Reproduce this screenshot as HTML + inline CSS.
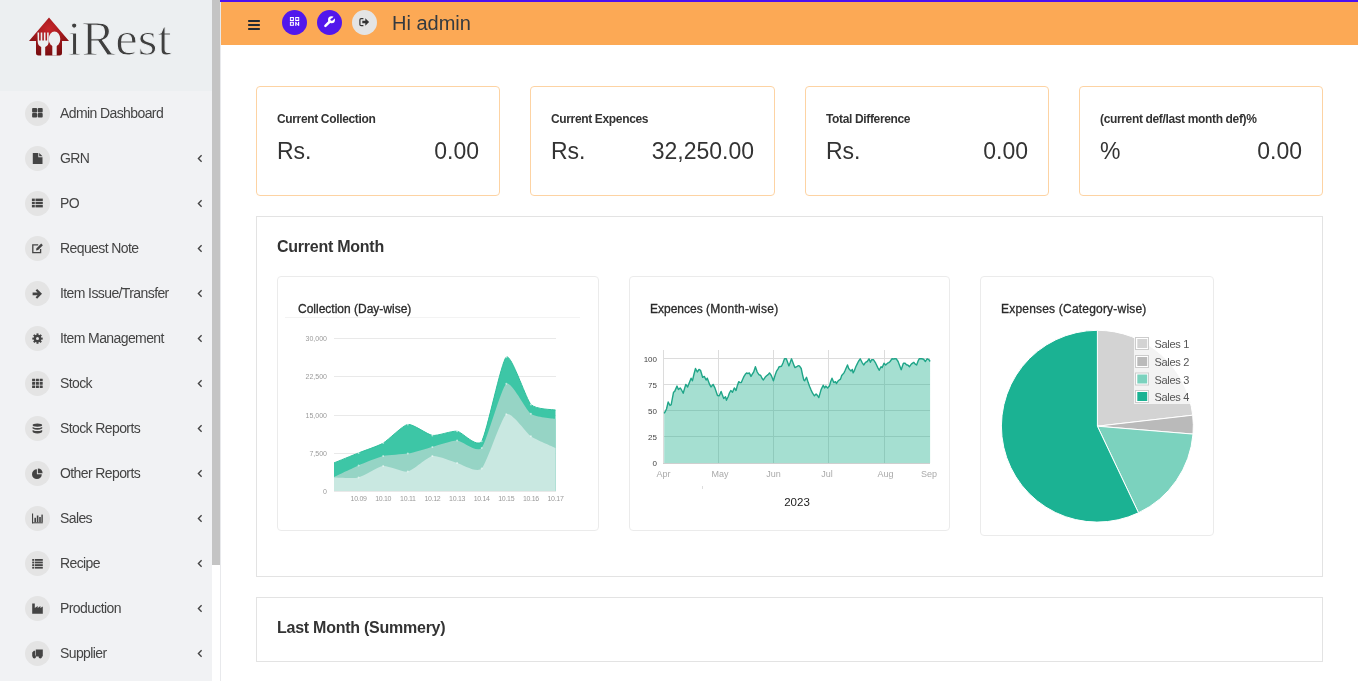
<!DOCTYPE html>
<html><head><meta charset="utf-8">
<style>
*{margin:0;padding:0;box-sizing:border-box}
html,body{width:1358px;height:681px;overflow:hidden;background:#fff;font-family:"Liberation Sans",sans-serif;color:#333}
body>*{will-change:transform}
.abs{position:absolute}
#side{position:absolute;left:0;top:0;width:212px;height:681px;background:#f1f2f4}
#logo{position:absolute;left:0;top:0;width:212px;height:91px;background:#eceff1}
#sb{position:absolute;left:212px;top:0;width:8px;height:681px;background:#fff}
#thumb{position:absolute;left:212px;top:0;width:8px;height:565px;background:#c4c4c4}
#vline{position:absolute;left:220px;top:0;width:1px;height:681px;background:#e8e9ec}
.mi{position:absolute;left:0;width:212px;height:45px}
.mi .ic{position:absolute;left:25px;top:10px;width:25px;height:25px;border-radius:50%;background:#e4e4e4}
.mi .ic svg{position:absolute;left:0;top:0}
.mi .t{position:absolute;left:60px;top:0;line-height:45px;font-size:14px;color:#444;white-space:nowrap;letter-spacing:-0.6px}
.mi .ch{position:absolute;left:196px;top:18px}
#hdr{position:absolute;left:221px;top:0;width:1137px;height:45px;background:#fca955}
#hdrtop{position:absolute;left:220px;top:0;width:1138px;height:2px;background:#4c10ef}
.hc{position:absolute;top:10px;width:25px;height:25px;border-radius:50%}
.card{position:absolute;top:86px;width:244px;height:110px;border:1px solid #fdd3a3;border-radius:4px;background:#fff}
.card .ti{position:absolute;left:20px;top:25px;font-size:12px;font-weight:bold;color:#333;letter-spacing:-0.35px;white-space:nowrap}
.card .l{position:absolute;left:20px;top:51px;font-size:23px;color:#333}
.card .r{position:absolute;right:20px;top:51px;font-size:23px;color:#333}
.panel{position:absolute;left:256px;width:1067px;border:1px solid #e3e3e3;background:#fff}
.ph{position:absolute;left:20px;font-size:16px;font-weight:bold;color:#333;letter-spacing:-0.25px;white-space:nowrap}
.cc{position:absolute;border:1px solid #ebebeb;border-radius:4px;background:#fff}
.ct{position:absolute;font-size:12px;color:#2a2a2a;white-space:nowrap;-webkit-text-stroke:0.3px #2a2a2a}
svg text{font-family:"Liberation Sans",sans-serif}
</style></head><body>
<div id="side">
  <div id="logo">
    <svg class="abs" style="left:0;top:0" width="212" height="91" viewBox="0 0 212 91">
      <defs><radialGradient id="rg" cx="0.5" cy="0.3" r="0.7"><stop offset="0" stop-color="#c8262a"/><stop offset="1" stop-color="#7a0d10"/></radialGradient></defs>
      <path d="M49 17.5 L69 41 L62 41 L62 53 Q62 55.5 59.5 55.5 L38.5 55.5 Q36 55.5 36 53 L36 41 L29 41 Z" fill="url(#rg)"/>
      <g fill="#eceff1">
        <path d="M37.5 32.5 h1.6 v8 h1.6 v-8 h1.6 v8 h1.6 v-8 h1.6 v8 h1.6 v-8 h1.6 v9 q0 4 -3.5 5.5 v9.5 h-4 v-9.5 q-3.5 -1.5 -3.5 -5.5 Z"/>
        <ellipse cx="54.5" cy="39" rx="5.8" ry="7.5"/>
        <rect x="52.3" y="44" width="4.4" height="11.5"/>
      </g>
      <text x="67.5" y="55" style="font-family:'Liberation Serif',serif" font-size="48" fill="#3f3f3f" stroke="#eceff1" stroke-width="1" textLength="104" lengthAdjust="spacingAndGlyphs">iRest</text>
    </svg>
  </div>
  <div class="mi" style="top:91px"><div class="ic"><svg width="25" height="25" viewBox="0 0 25 25"><g fill="#444"><rect x="7.1" y="7.1" width="5" height="4.3" rx="0.9"/><rect x="12.7" y="7.1" width="5" height="4.3" rx="0.9"/><rect x="7.1" y="12.1" width="5" height="4.3" rx="0.9"/><rect x="12.7" y="12.1" width="5" height="4.3" rx="0.9"/></g></svg></div><div class="t">Admin Dashboard</div></div>
<div class="mi" style="top:136px"><div class="ic"><svg width="25" height="25" viewBox="0 0 25 25"><path d="M7.8 7 H13.3 V11.2 H17.5 V18 H7.8 Z M14.2 7 L17.5 10.3 H14.2 Z" fill="#444"/></svg></div><div class="t">GRN</div><svg class="ch" width="7" height="9" viewBox="0 0 7 9"><path d="M5.6 1.2 L2.4 4.5 L5.6 7.8" fill="none" stroke="#444" stroke-width="1.35"/></svg></div>
<div class="mi" style="top:181px"><div class="ic"><svg width="25" height="25" viewBox="0 0 25 25"><g fill="#444"><rect x="6.9" y="7.6" width="2.9" height="2.4"/><rect x="10.5" y="7.6" width="7.3" height="2.4"/><rect x="6.9" y="10.8" width="2.9" height="2.4"/><rect x="10.5" y="10.8" width="7.3" height="2.4"/><rect x="6.9" y="14" width="2.9" height="2.4"/><rect x="10.5" y="14" width="7.3" height="2.4"/></g></svg></div><div class="t">PO</div><svg class="ch" width="7" height="9" viewBox="0 0 7 9"><path d="M5.6 1.2 L2.4 4.5 L5.6 7.8" fill="none" stroke="#444" stroke-width="1.35"/></svg></div>
<div class="mi" style="top:226px"><div class="ic"><svg width="25" height="25" viewBox="0 0 25 25"><path d="M13.2 8.8 H7.8 V16.6 H15.6 V13" fill="none" stroke="#444" stroke-width="1.3"/><path d="M11 14.6 L11.5 12.3 L16.2 7.6 L17.9 9.3 L13.2 14 Z" fill="#444"/></svg></div><div class="t">Request Note</div><svg class="ch" width="7" height="9" viewBox="0 0 7 9"><path d="M5.6 1.2 L2.4 4.5 L5.6 7.8" fill="none" stroke="#444" stroke-width="1.35"/></svg></div>
<div class="mi" style="top:271px"><div class="ic"><svg width="25" height="25" viewBox="0 0 25 25"><path d="M7.6 11.8 H12.6 L10.6 9.8 L12.1 8.3 L17 13.2 L12.1 18.1 L10.6 16.6 L12.6 14.6 H7.6 Z" fill="#444" transform="translate(0,-0.4)"/></svg></div><div class="t">Item Issue/Transfer</div><svg class="ch" width="7" height="9" viewBox="0 0 7 9"><path d="M5.6 1.2 L2.4 4.5 L5.6 7.8" fill="none" stroke="#444" stroke-width="1.35"/></svg></div>
<div class="mi" style="top:316px"><div class="ic"><svg width="25" height="25" viewBox="0 0 25 25"><g fill="#444"><circle cx="12.5" cy="12.6" r="3.8"/><g stroke="#444" stroke-width="2"><line x1="12.5" y1="7.4" x2="12.5" y2="17.8"/><line x1="7.3" y1="12.6" x2="17.7" y2="12.6"/><line x1="8.8" y1="8.9" x2="16.2" y2="16.3"/><line x1="16.2" y1="8.9" x2="8.8" y2="16.3"/></g></g><circle cx="12.5" cy="12.6" r="1.5" fill="#e4e4e4"/></svg></div><div class="t">Item Management</div><svg class="ch" width="7" height="9" viewBox="0 0 7 9"><path d="M5.6 1.2 L2.4 4.5 L5.6 7.8" fill="none" stroke="#444" stroke-width="1.35"/></svg></div>
<div class="mi" style="top:361px"><div class="ic"><svg width="25" height="25" viewBox="0 0 25 25"><g fill="#444"><rect x="7.1" y="7.7" width="3" height="2.6" rx="0.3"/><rect x="10.9" y="7.7" width="3" height="2.6" rx="0.3"/><rect x="14.7" y="7.7" width="3" height="2.6" rx="0.3"/><rect x="7.1" y="11.1" width="3" height="2.6" rx="0.3"/><rect x="10.9" y="11.1" width="3" height="2.6" rx="0.3"/><rect x="14.7" y="11.1" width="3" height="2.6" rx="0.3"/><rect x="7.1" y="14.5" width="3" height="2.6" rx="0.3"/><rect x="10.9" y="14.5" width="3" height="2.6" rx="0.3"/><rect x="14.7" y="14.5" width="3" height="2.6" rx="0.3"/></g></svg></div><div class="t">Stock</div><svg class="ch" width="7" height="9" viewBox="0 0 7 9"><path d="M5.6 1.2 L2.4 4.5 L5.6 7.8" fill="none" stroke="#444" stroke-width="1.35"/></svg></div>
<div class="mi" style="top:406px"><div class="ic"><svg width="25" height="25" viewBox="0 0 25 25"><g fill="#444"><ellipse cx="12.4" cy="9.1" rx="4.8" ry="1.6"/><path d="M7.6 10.9 Q12.4 13.3 17.2 10.9 V12.6 Q12.4 15 7.6 12.6 Z"/><path d="M7.6 13.9 Q12.4 16.3 17.2 13.9 V15.6 Q17.2 17.4 12.4 17.4 Q7.6 17.4 7.6 15.6 Z"/></g></svg></div><div class="t">Stock Reports</div><svg class="ch" width="7" height="9" viewBox="0 0 7 9"><path d="M5.6 1.2 L2.4 4.5 L5.6 7.8" fill="none" stroke="#444" stroke-width="1.35"/></svg></div>
<div class="mi" style="top:451px"><div class="ic"><svg width="25" height="25" viewBox="0 0 25 25"><path d="M11.9 8.3 A4.9 4.9 0 1 0 16.8 13.2 H11.9 Z" fill="#444"/><path d="M12.9 7.6 A4.9 4.9 0 0 1 17.6 12.3 H12.9 Z" fill="#444"/></svg></div><div class="t">Other Reports</div><svg class="ch" width="7" height="9" viewBox="0 0 7 9"><path d="M5.6 1.2 L2.4 4.5 L5.6 7.8" fill="none" stroke="#444" stroke-width="1.35"/></svg></div>
<div class="mi" style="top:496px"><div class="ic"><svg width="25" height="25" viewBox="0 0 25 25"><g fill="#444"><rect x="7" y="7.5" width="1.1" height="9.8"/><rect x="7" y="16.3" width="10.8" height="1"/><rect x="9.4" y="11.8" width="1.6" height="4.5"/><rect x="11.8" y="9.5" width="1.6" height="6.8"/><rect x="14.2" y="11" width="1.6" height="5.3"/><rect x="16.4" y="8.6" width="1.4" height="7.7"/></g></svg></div><div class="t">Sales</div><svg class="ch" width="7" height="9" viewBox="0 0 7 9"><path d="M5.6 1.2 L2.4 4.5 L5.6 7.8" fill="none" stroke="#444" stroke-width="1.35"/></svg></div>
<div class="mi" style="top:541px"><div class="ic"><svg width="25" height="25" viewBox="0 0 25 25"><g fill="#444"><rect x="7.2" y="8" width="2" height="1.8"/><rect x="9.9" y="8" width="7.9" height="1.8"/><rect x="7.2" y="10.6" width="2" height="1.8"/><rect x="9.9" y="10.6" width="7.9" height="1.8"/><rect x="7.2" y="13.2" width="2" height="1.8"/><rect x="9.9" y="13.2" width="7.9" height="1.8"/><rect x="7.2" y="15.8" width="2" height="1.8"/><rect x="9.9" y="15.8" width="7.9" height="1.8"/></g></svg></div><div class="t">Recipe</div><svg class="ch" width="7" height="9" viewBox="0 0 7 9"><path d="M5.6 1.2 L2.4 4.5 L5.6 7.8" fill="none" stroke="#444" stroke-width="1.35"/></svg></div>
<div class="mi" style="top:586px"><div class="ic"><svg width="25" height="25" viewBox="0 0 25 25"><path d="M7.2 17.8 V7.4 H9.8 V12 L12.7 10 V12 L15.4 10 V12 L17.8 10.4 V17.8 Z" fill="#444"/></svg></div><div class="t">Production</div><svg class="ch" width="7" height="9" viewBox="0 0 7 9"><path d="M5.6 1.2 L2.4 4.5 L5.6 7.8" fill="none" stroke="#444" stroke-width="1.35"/></svg></div>
<div class="mi" style="top:631px"><div class="ic"><svg width="25" height="25" viewBox="0 0 25 25"><path d="M10.8 8.6 H17.8 V15.4 H10.8 Z M7.2 11.6 L8.9 9.8 H10.2 V15.4 H7.2 Z" fill="#444"/><circle cx="9.3" cy="15.8" r="1.7" fill="#444"/><circle cx="15.3" cy="15.8" r="1.7" fill="#444"/></svg></div><div class="t">Supplier</div><svg class="ch" width="7" height="9" viewBox="0 0 7 9"><path d="M5.6 1.2 L2.4 4.5 L5.6 7.8" fill="none" stroke="#444" stroke-width="1.35"/></svg></div>

</div>
<div id="sb"></div>
<div id="thumb"></div>
<div id="vline"></div>
<div id="hdr"></div>
<div id="hdrtop"></div>
<svg class="abs" style="left:248px;top:20px" width="12" height="10"><rect x="0" y="0" width="12" height="2" rx="0.8" fill="#232a33"/><rect x="0" y="4" width="12" height="2" rx="0.8" fill="#232a33"/><rect x="0" y="8" width="12" height="2" rx="0.8" fill="#232a33"/></svg>
<div class="hc" style="left:282px;background:#5217ec">
  <svg class="abs" style="left:0;top:0" width="25" height="25"><g fill="none" stroke="#fff" stroke-width="1"><rect x="8.4" y="7.5" width="3" height="3"/><rect x="13.7" y="7.5" width="3" height="3"/><rect x="8.4" y="12.3" width="3" height="3"/></g><g fill="#fff" opacity="0.6"><rect x="9.5" y="8.6" width="0.9" height="0.9"/><rect x="14.8" y="8.6" width="0.9" height="0.9"/><rect x="9.5" y="13.4" width="0.9" height="0.9"/></g><g fill="#fff"><rect x="13.2" y="11.8" width="1.2" height="4"/><rect x="16" y="11.8" width="1.2" height="4"/><path d="M14.2 12.2 L16.2 14.8 L16.2 15.8 L14.2 13.4 Z"/></g></svg>
</div>
<div class="hc" style="left:317px;background:#5217ec">
  <svg class="abs" style="left:0;top:0" width="25" height="25"><path d="M8.4 15.9 L12.8 11.5" stroke="#fff" stroke-width="2.5" stroke-linecap="round"/><circle cx="14.5" cy="9.8" r="3.5" fill="#fff"/><circle cx="14.7" cy="9.6" r="1.2" fill="#5217ec"/><path d="M14.2 9.1 L17.3 6 L18.8 7.5 L15.7 10.6 Z" fill="#5217ec"/></svg>
</div>
<div class="hc" style="left:352px;background:#e4e4e4">
  <svg class="abs" style="left:0;top:0" width="25" height="25"><path d="M11.4 8.7 H9.1 Q7.9 8.7 7.9 9.9 V14.5 Q7.9 15.7 9.1 15.7 H11.4" fill="none" stroke="#333" stroke-width="1.2"/><path d="M10.3 10.7 H13.3 V8.2 L17.1 12 L13.3 15.8 V13.3 H10.3 Z" fill="#333"/></svg>
</div>
<div class="abs" style="left:392px;top:12px;font-size:20px;color:#343a40;white-space:nowrap">Hi admin</div>

<div class="card" style="left:256px"><div class="ti">Current Collection</div><div class="l">Rs.</div><div class="r">0.00</div></div>
<div class="card" style="left:530px;width:245px"><div class="ti">Current Expences</div><div class="l">Rs.</div><div class="r">32,250.00</div></div>
<div class="card" style="left:805px"><div class="ti">Total Difference</div><div class="l">Rs.</div><div class="r">0.00</div></div>
<div class="card" style="left:1079px"><div class="ti">(current def/last month def)%</div><div class="l">%</div><div class="r">0.00</div></div>

<div class="panel" style="top:216px;height:361px"><div class="ph" style="top:21px">Current Month</div></div>
<div class="cc" style="left:277px;top:276px;width:322px;height:255px"></div>
<div class="cc" style="left:629px;top:276px;width:321px;height:255px"></div>
<div class="cc" style="left:980px;top:276px;width:234px;height:260px"></div>
<div class="ct" style="left:298px;top:302px">Collection (Day-wise)</div>
<div class="ct" style="left:650px;top:302px">Expences <span style="letter-spacing:0.25px">(Month-wise)</span></div>
<div class="ct" style="left:1001px;top:302px;letter-spacing:0.2px">Expenses (Category-wise)</div>

<div class="panel" style="top:597px;height:65px"><div class="ph" style="top:21px">Last Month (Summery)</div></div>

<svg class="abs" style="left:0;top:0" width="1358" height="681" viewBox="0 0 1358 681">
  <!-- chart 1 -->
  <line x1="285" y1="317.5" x2="580" y2="317.5" stroke="#f3f3f3" stroke-width="1"/>
  <g stroke="#e9e9e9" stroke-width="1">
    <line x1="334" y1="338.5" x2="556" y2="338.5"/><line x1="334" y1="376.5" x2="556" y2="376.5"/><line x1="334" y1="415.5" x2="556" y2="415.5"/><line x1="334" y1="453.5" x2="556" y2="453.5"/><line x1="334" y1="491.5" x2="556" y2="491.5"/>
  </g>
  <g font-size="7" fill="#9a9a9a" text-anchor="end">
    <text x="327" y="341">30,000</text><text x="327" y="379">22,500</text><text x="327" y="418">15,000</text><text x="327" y="456">7,500</text><text x="327" y="494">0</text>
  </g>
  <path d="M334.0 491.0 L334.0 462.9 C336.5 461.9 353.7 454.9 358.6 452.9 C363.5 450.9 378.3 446.0 383.2 443.1 C388.1 440.2 402.9 425.2 407.8 424.4 C412.8 423.6 427.5 434.7 432.4 435.4 C437.4 436.1 452.1 430.6 457.1 431.2 C462.0 431.8 476.7 448.6 481.7 441.2 C486.6 433.8 501.4 360.7 506.3 357.0 C511.2 353.3 526.0 399.1 530.9 404.4 C535.8 409.7 553.0 409.4 555.5 410.0 L555.5 491.0 Z" fill="#3dc6a6"/>
  <path d="M334.0 491.0 L334.0 476.9 C336.5 475.8 353.7 467.5 358.6 465.4 C363.5 463.3 378.3 457.3 383.2 456.1 C388.1 454.9 402.9 454.5 407.8 453.6 C412.8 452.7 427.5 448.2 432.4 446.9 C437.4 445.6 452.1 440.5 457.1 440.6 C462.0 440.7 476.7 453.6 481.7 447.9 C486.6 442.2 501.4 387.1 506.3 383.7 C511.2 380.3 526.0 410.2 530.9 413.7 C535.8 417.2 553.0 418.4 555.5 418.9 L555.5 491.0 Z" fill="#96d4c5"/>
  <path d="M334.0 491.0 L334.0 477.4 C336.5 477.4 353.7 478.5 358.6 477.4 C363.5 476.3 378.3 466.7 383.2 466.1 C388.1 465.5 402.9 472.6 407.8 471.6 C412.8 470.6 427.5 457.0 432.4 456.1 C437.4 455.2 452.1 461.6 457.1 462.9 C462.0 464.1 476.7 473.5 481.7 468.6 C486.6 463.7 501.4 417.4 506.3 414.2 C511.2 411.0 526.0 432.8 530.9 436.2 C535.8 439.6 553.0 446.7 555.5 447.9 L555.5 491.0 Z" fill="#c9e8e1"/>
  <path d="M334.0 462.9 C336.5 461.9 353.7 454.9 358.6 452.9 C363.5 450.9 378.3 446.0 383.2 443.1 C388.1 440.2 402.9 425.2 407.8 424.4 C412.8 423.6 427.5 434.7 432.4 435.4 C437.4 436.1 452.1 430.6 457.1 431.2 C462.0 431.8 476.7 448.6 481.7 441.2 C486.6 433.8 501.4 360.7 506.3 357.0 C511.2 353.3 526.0 399.1 530.9 404.4 C535.8 409.7 553.0 409.4 555.5 410.0" fill="none" stroke="#30bf9c" stroke-width="1"/>
  <g fill="#fff" opacity="0.55"><circle cx="358.6" cy="452.9" r="1"/><circle cx="383.2" cy="443.1" r="1"/><circle cx="407.8" cy="424.4" r="1"/><circle cx="432.4" cy="435.4" r="1"/><circle cx="457.1" cy="431.2" r="1"/><circle cx="481.7" cy="441.2" r="1"/><circle cx="506.3" cy="357.0" r="1"/><circle cx="530.9" cy="404.4" r="1"/><circle cx="358.6" cy="465.4" r="1"/><circle cx="383.2" cy="456.1" r="1"/><circle cx="407.8" cy="453.6" r="1"/><circle cx="432.4" cy="446.9" r="1"/><circle cx="457.1" cy="440.6" r="1"/><circle cx="481.7" cy="447.9" r="1"/><circle cx="506.3" cy="383.7" r="1"/><circle cx="530.9" cy="413.7" r="1"/><circle cx="358.6" cy="477.4" r="1"/><circle cx="383.2" cy="466.1" r="1"/><circle cx="407.8" cy="471.6" r="1"/><circle cx="432.4" cy="456.1" r="1"/><circle cx="457.1" cy="462.9" r="1"/><circle cx="481.7" cy="468.6" r="1"/><circle cx="506.3" cy="414.2" r="1"/><circle cx="530.9" cy="436.2" r="1"/></g>
  <g font-size="7" fill="#9a9a9a" text-anchor="middle" letter-spacing="-0.3">
    <text x="358.6" y="501">10.09</text><text x="383.2" y="501">10.10</text><text x="407.8" y="501">10.11</text><text x="432.4" y="501">10.12</text><text x="457.1" y="501">10.13</text><text x="481.7" y="501">10.14</text><text x="506.3" y="501">10.15</text><text x="530.9" y="501">10.16</text><text x="555.5" y="501">10.17</text>
  </g>
  <!-- chart 2 -->
  <g stroke="#dcdcdc" stroke-width="1">
    <line x1="664" y1="358.5" x2="930" y2="358.5"/><line x1="664" y1="384.5" x2="930" y2="384.5"/><line x1="664" y1="410.5" x2="930" y2="410.5"/><line x1="664" y1="436.5" x2="930" y2="436.5"/>
    <line x1="718.5" y1="350" x2="718.5" y2="463"/><line x1="773.5" y1="350" x2="773.5" y2="463"/><line x1="828.5" y1="350" x2="828.5" y2="463"/><line x1="884.5" y1="350" x2="884.5" y2="463"/>
    <line x1="663.5" y1="350" x2="663.5" y2="463"/>
  </g>
  <path d="M664.2 413.4 L665.6 410.8 L666.5 409.0 L668.2 402.0 L670.0 405.5 L671.2 404.6 L673.5 392.3 L674.7 391.4 L677.0 386.1 L678.4 389.6 L680.2 387.9 L681.7 390.2 L683.2 393.2 L684.5 388.8 L685.8 384.4 L687.6 387.0 L689.4 382.6 L691.1 378.2 L692.4 380.8 L693.9 374.5 L695.5 368.5 L697.3 372.0 L699.0 369.4 L700.5 370.3 L702.6 377.3 L704.3 376.4 L706.1 380.0 L707.3 378.2 L709.6 384.4 L711.0 387.0 L713.1 384.4 L714.9 387.9 L716.2 391.8 L717.5 395.5 L719.3 395.8 L721.1 391.4 L722.4 395.1 L723.7 398.5 L725.5 396.7 L726.4 400.2 L728.1 396.7 L729.4 393.0 L730.8 390.5 L732.5 392.3 L734.3 387.9 L736.0 390.5 L737.4 385.4 L738.7 381.7 L740.0 382.6 L741.3 382.6 L742.7 379.2 L744.0 376.4 L745.3 374.3 L746.6 372.9 L747.9 373.6 L749.3 372.9 L751.0 376.4 L752.3 374.2 L753.7 372.0 L755.4 366.7 L757.2 372.0 L758.9 374.7 L760.7 375.5 L762.0 378.2 L763.4 380.0 L765.1 377.3 L766.6 375.8 L768.1 374.6 L769.5 372.9 L771.3 375.5 L773.4 380.8 L775.0 375.5 L776.6 371.1 L777.9 369.1 L779.2 366.7 L781.5 366.2 L783.0 363.0 L784.5 358.8 L786.3 358.8 L787.6 362.2 L788.9 365.9 L790.2 362.5 L791.5 358.8 L792.9 362.4 L794.2 365.9 L795.0 367.6 L796.8 366.7 L798.1 365.7 L799.4 365.9 L801.2 368.5 L802.5 374.6 L803.8 380.0 L804.7 380.8 L806.5 377.3 L808.2 382.6 L809.5 386.2 L810.9 389.6 L812.6 393.2 L814.4 395.8 L816.1 394.0 L817.5 395.5 L818.8 397.6 L821.1 389.6 L823.2 385.2 L824.6 387.9 L825.8 386.1 L827.6 387.9 L829.4 386.1 L830.7 381.5 L832.0 378.2 L833.8 382.6 L835.5 381.7 L836.4 383.5 L838.2 380.8 L840.5 379.1 L841.7 375.5 L844.0 372.9 L845.2 370.3 L847.5 365.0 L848.7 368.5 L851.0 371.1 L852.3 369.4 L853.1 372.9 L854.5 370.3 L855.8 366.7 L857.1 364.1 L858.4 361.5 L860.2 358.8 L862.0 362.3 L863.7 365.0 L865.5 362.3 L867.2 361.5 L869.0 358.8 L870.4 362.3 L871.6 359.7 L873.4 359.7 L875.7 363.2 L877.8 367.6 L879.2 370.3 L881.0 366.7 L882.2 367.6 L884.0 363.2 L885.7 365.0 L887.5 363.2 L888.8 362.6 L890.1 361.5 L891.9 358.8 L893.4 359.0 L894.8 358.8 L896.3 358.8 L898.1 361.5 L899.8 365.9 L901.2 369.7 L903.4 363.2 L905.1 363.2 L906.4 364.7 L907.8 365.0 L909.5 366.7 L911.3 364.1 L912.6 363.1 L913.9 362.3 L915.2 364.1 L916.6 365.0 L918.3 360.6 L919.2 358.8 L920.5 358.8 L921.9 358.8 L923.6 359.2 L925.4 361.5 L927.1 358.8 L928.9 359.7 L930.1 361.5 L930.1 463 L664.2 463 Z" fill="#1fae8c" fill-opacity="0.4"/>
  
  <path d="M664.2 413.4 L665.6 410.8 L666.5 409.0 L668.2 402.0 L670.0 405.5 L671.2 404.6 L673.5 392.3 L674.7 391.4 L677.0 386.1 L678.4 389.6 L680.2 387.9 L681.7 390.2 L683.2 393.2 L684.5 388.8 L685.8 384.4 L687.6 387.0 L689.4 382.6 L691.1 378.2 L692.4 380.8 L693.9 374.5 L695.5 368.5 L697.3 372.0 L699.0 369.4 L700.5 370.3 L702.6 377.3 L704.3 376.4 L706.1 380.0 L707.3 378.2 L709.6 384.4 L711.0 387.0 L713.1 384.4 L714.9 387.9 L716.2 391.8 L717.5 395.5 L719.3 395.8 L721.1 391.4 L722.4 395.1 L723.7 398.5 L725.5 396.7 L726.4 400.2 L728.1 396.7 L729.4 393.0 L730.8 390.5 L732.5 392.3 L734.3 387.9 L736.0 390.5 L737.4 385.4 L738.7 381.7 L740.0 382.6 L741.3 382.6 L742.7 379.2 L744.0 376.4 L745.3 374.3 L746.6 372.9 L747.9 373.6 L749.3 372.9 L751.0 376.4 L752.3 374.2 L753.7 372.0 L755.4 366.7 L757.2 372.0 L758.9 374.7 L760.7 375.5 L762.0 378.2 L763.4 380.0 L765.1 377.3 L766.6 375.8 L768.1 374.6 L769.5 372.9 L771.3 375.5 L773.4 380.8 L775.0 375.5 L776.6 371.1 L777.9 369.1 L779.2 366.7 L781.5 366.2 L783.0 363.0 L784.5 358.8 L786.3 358.8 L787.6 362.2 L788.9 365.9 L790.2 362.5 L791.5 358.8 L792.9 362.4 L794.2 365.9 L795.0 367.6 L796.8 366.7 L798.1 365.7 L799.4 365.9 L801.2 368.5 L802.5 374.6 L803.8 380.0 L804.7 380.8 L806.5 377.3 L808.2 382.6 L809.5 386.2 L810.9 389.6 L812.6 393.2 L814.4 395.8 L816.1 394.0 L817.5 395.5 L818.8 397.6 L821.1 389.6 L823.2 385.2 L824.6 387.9 L825.8 386.1 L827.6 387.9 L829.4 386.1 L830.7 381.5 L832.0 378.2 L833.8 382.6 L835.5 381.7 L836.4 383.5 L838.2 380.8 L840.5 379.1 L841.7 375.5 L844.0 372.9 L845.2 370.3 L847.5 365.0 L848.7 368.5 L851.0 371.1 L852.3 369.4 L853.1 372.9 L854.5 370.3 L855.8 366.7 L857.1 364.1 L858.4 361.5 L860.2 358.8 L862.0 362.3 L863.7 365.0 L865.5 362.3 L867.2 361.5 L869.0 358.8 L870.4 362.3 L871.6 359.7 L873.4 359.7 L875.7 363.2 L877.8 367.6 L879.2 370.3 L881.0 366.7 L882.2 367.6 L884.0 363.2 L885.7 365.0 L887.5 363.2 L888.8 362.6 L890.1 361.5 L891.9 358.8 L893.4 359.0 L894.8 358.8 L896.3 358.8 L898.1 361.5 L899.8 365.9 L901.2 369.7 L903.4 363.2 L905.1 363.2 L906.4 364.7 L907.8 365.0 L909.5 366.7 L911.3 364.1 L912.6 363.1 L913.9 362.3 L915.2 364.1 L916.6 365.0 L918.3 360.6 L919.2 358.8 L920.5 358.8 L921.9 358.8 L923.6 359.2 L925.4 361.5 L927.1 358.8 L928.9 359.7 L930.1 361.5" fill="none" stroke="#1fa588" stroke-width="1.4" stroke-linejoin="round"/>
  <line x1="663" y1="463.5" x2="930" y2="463.5" stroke="#cfcfcf"/>
  <g font-size="8" fill="#444" text-anchor="end">
    <text x="657" y="362">100</text><text x="657" y="388">75</text><text x="657" y="414">50</text><text x="657" y="440">25</text><text x="657" y="466">0</text>
  </g>
  <g font-size="9" fill="#aaa" text-anchor="middle">
    <text x="663.5" y="477">Apr</text><text x="720" y="477">May</text><text x="773.5" y="477">Jun</text><text x="827" y="477">Jul</text><text x="885.5" y="477">Aug</text><text x="929" y="477">Sep</text>
  </g>
  <line x1="702.5" y1="486" x2="702.5" y2="489" stroke="#ddd"/>
  <text x="797" y="505.5" font-size="11.5" fill="#222" text-anchor="middle">2023</text>
  <!-- pie -->
  <path d="M1097.4 426.2 L1097.4 330.3 A95.9 95.9 0 0 1 1192.7 415.2 Z" fill="#d3d3d3" stroke="#fff" stroke-width="1"/><path d="M1097.4 426.2 L1192.7 415.2 A95.9 95.9 0 0 1 1193.0 434.1 Z" fill="#bababa" stroke="#fff" stroke-width="1"/><path d="M1097.4 426.2 L1193.0 434.1 A95.9 95.9 0 0 1 1138.5 512.8 Z" fill="#7bd2be" stroke="#fff" stroke-width="1"/><path d="M1097.4 426.2 L1138.5 512.8 A95.9 95.9 0 1 1 1097.4 330.3 Z" fill="#1bb293" stroke="#fff" stroke-width="1"/>
  <rect x="1134" y="336" width="56" height="68" fill="#fff" opacity="0.72"/>
  <g>
    <rect x="1135.5" y="337.5" width="13" height="12" fill="#fff" stroke="#ccc"/><rect x="1137.3" y="339.0" width="9.9" height="9" fill="#d3d3d3"/>
    <rect x="1135.5" y="355.5" width="13" height="12" fill="#fff" stroke="#ccc"/><rect x="1137.3" y="357.0" width="9.9" height="9" fill="#bababa"/>
    <rect x="1135.5" y="373.0" width="13" height="12" fill="#fff" stroke="#ccc"/><rect x="1137.3" y="374.5" width="9.9" height="9" fill="#7bd2be"/>
    <rect x="1135.5" y="390.5" width="13" height="12" fill="#fff" stroke="#ccc"/><rect x="1137.3" y="392.0" width="9.9" height="9" fill="#1bb293"/>
    </g>
  <g font-size="11" fill="#555" letter-spacing="-0.3">
    <text x="1154.5" y="348">Sales 1</text><text x="1154.5" y="366">Sales 2</text><text x="1154.5" y="383.5">Sales 3</text><text x="1154.5" y="401">Sales 4</text>
  </g>
</svg>
</body></html>
